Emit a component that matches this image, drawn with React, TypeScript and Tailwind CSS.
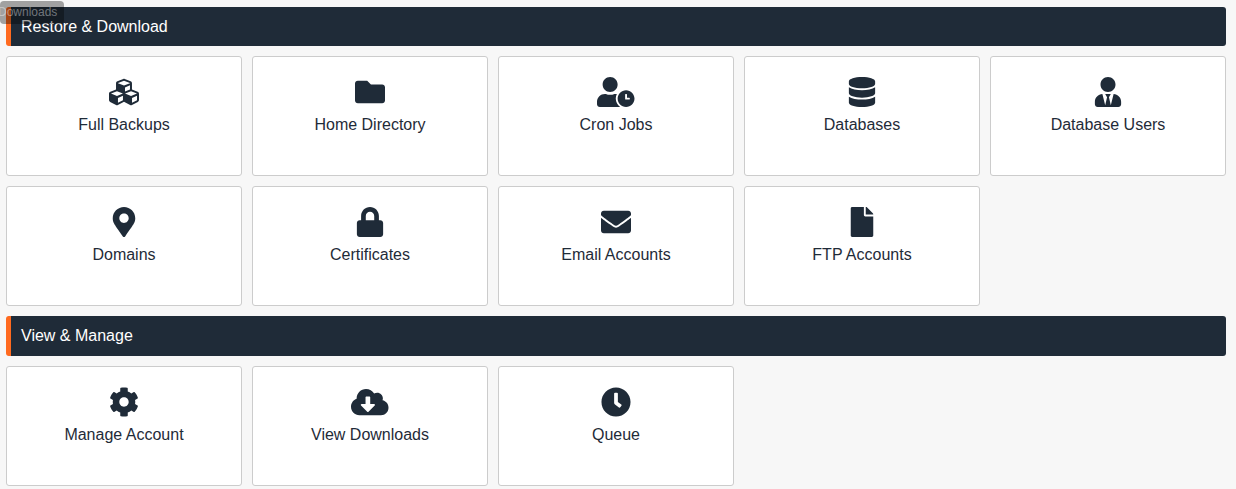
import type { IconType } from 'react-icons';
import {
  FaClock,
  FaCloudDownloadAlt,
  FaCog,
  FaCubes,
  FaDatabase,
  FaEnvelope,
  FaFile,
  FaFolder,
  FaLock,
  FaMapMarkerAlt,
  FaUserClock,
  FaUserTie,
} from 'react-icons/fa';

interface Tile {
  label: string;
  icon: IconType;
  iconWidth: string;
}

const restoreTiles: Tile[] = [
  { label: 'Full Backups', icon: FaCubes, iconWidth: 'w-[30px]' },
  { label: 'Home Directory', icon: FaFolder, iconWidth: 'w-[30px]' },
  { label: 'Cron Jobs', icon: FaUserClock, iconWidth: 'w-[37.5px]' },
  { label: 'Databases', icon: FaDatabase, iconWidth: 'w-[30px]' },
  { label: 'Database Users', icon: FaUserTie, iconWidth: 'w-[30px]' },
  { label: 'Domains', icon: FaMapMarkerAlt, iconWidth: 'w-[30px]' },
  { label: 'Certificates', icon: FaLock, iconWidth: 'w-[30px]' },
  { label: 'Email Accounts', icon: FaEnvelope, iconWidth: 'w-[30px]' },
  { label: 'FTP Accounts', icon: FaFile, iconWidth: 'w-[30px]' },
];

const manageTiles: Tile[] = [
  { label: 'Manage Account', icon: FaCog, iconWidth: 'w-[30px]' },
  { label: 'View Downloads', icon: FaCloudDownloadAlt, iconWidth: 'w-[37.5px]' },
  { label: 'Queue', icon: FaClock, iconWidth: 'w-[30px]' },
];

const SectionBar = ({ title, className }: { title: string; className: string }) => (
  <div
    className={`flex items-center rounded-[3px] border-l-[5px] border-[#ff6a1f] bg-[#1f2b38] pl-[10px] text-white ${className}`}
  >
    {title}
  </div>
);

const TileGrid = ({ tiles }: { tiles: Tile[] }) => (
  <div className="grid grid-cols-[repeat(5,236px)] gap-[10px]">
    {tiles.map((tile) => (
      <a
        key={tile.label}
        className="flex h-[120px] flex-col items-center rounded-[3px] border border-[#cccccc] bg-white pt-[20px] text-[#1f2b38]"
      >
        <tile.icon className={`h-[30px] shrink-0 ${tile.iconWidth}`} />
        <span className="mt-[6px] leading-[24px]">{tile.label}</span>
      </a>
    ))}
  </div>
);

export default function App() {
  return (
    <div className="relative h-[489px] overflow-hidden bg-[#f7f7f7] pl-[6px] pr-[10px] pt-[7px] font-['Liberation_Sans',Arial,sans-serif] text-[16px]">
      {/* tooltip hangs off the left edge of the page in the original */}
      <div className="absolute left-0 top-[1px] z-10 h-[23px] w-[64px] whitespace-nowrap rounded-[4px] bg-black/35 text-[12px] leading-[22px] text-white/40">
        <span className="-ml-[2px] inline-block">Downloads</span>
      </div>
      <SectionBar title="Restore & Download" className="mb-[10px] h-[39px]" />
      <TileGrid tiles={restoreTiles} />
      <SectionBar title="View & Manage" className="mb-[10px] mt-[10px] h-[40px]" />
      <TileGrid tiles={manageTiles} />
    </div>
  );
}
